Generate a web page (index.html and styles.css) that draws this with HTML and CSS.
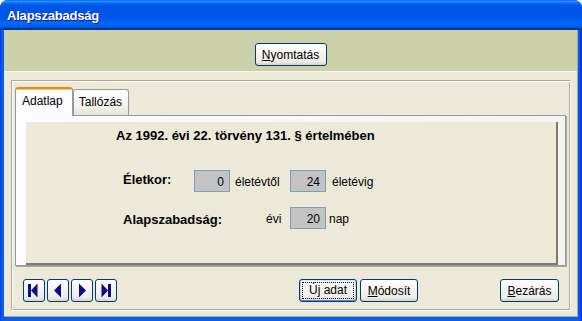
FILE: index.html
```html
<!DOCTYPE html>
<html lang="hu">
<head>
    <meta charset="UTF-8">
    <title>Alapszabadság</title>
    <link rel="stylesheet" href="styles.css">
</head>
<body>
    <div class="window">
        <div class="titlebar">Alapszabadság</div>
        <div class="client">
            <div class="toolbar">
                <button class="btn btn-print"><u>N</u>yomtatás</button>
            </div>
            <div class="content">
                <div class="group">
                    <div class="tabs">
                        <div class="tab tab-active">Adatlap</div>
                        <div class="tab tab-browse">Tallózás</div>
                    </div>
                    <div class="page">
                        <div class="panel">
                            <p class="law">Az 1992. évi 22. törvény 131. § értelmében</p>
                            <div class="row row-age">
                                <span class="label label-age">Életkor:</span>
                                <span class="field">0</span>
                                <span class="unit unit-from">életévtől</span>
                                <span class="field">24</span>
                                <span class="unit unit-to">életévig</span>
                            </div>
                            <div class="row row-days">
                                <span class="label label-days">Alapszabadság:</span>
                                <span class="unit unit-year">évi</span>
                                <span class="field">20</span>
                                <span class="unit unit-day">nap</span>
                            </div>
                        </div>
                    </div>
                    <div class="actions">
                        <div class="nav">
                            <button class="btn btn-nav" title="Első">
                                <svg viewBox="0 0 20 21" width="20" height="21"><rect x="4" y="4" width="3" height="13"/><polygon points="7,10.5 13.5,3.5 13.5,17.5"/></svg>
                            </button>
                            <button class="btn btn-nav" title="Előző">
                                <svg viewBox="0 0 20 21" width="20" height="21"><polygon points="6,10.5 13,3.5 13,17.5"/></svg>
                            </button>
                            <button class="btn btn-nav" title="Következő">
                                <svg viewBox="0 0 20 21" width="20" height="21"><polygon points="7,3.5 14,10.5 7,17.5"/></svg>
                            </button>
                            <button class="btn btn-nav" title="Utolsó">
                                <svg viewBox="0 0 20 21" width="20" height="21"><polygon points="5.5,3.5 12,10.5 5.5,17.5"/><rect x="12" y="4" width="3" height="13"/></svg>
                            </button>
                        </div>
                        <button class="btn btn-new btn-focus"><span class="focus-ring">Ú<u>j</u> adat</span></button>
                        <button class="btn btn-edit"><u>M</u>ódosít</button>
                        <button class="btn btn-close"><u>B</u>ezárás</button>
                    </div>
                </div>
            </div>
        </div>
    </div>
</body>
</html>
```

FILE: styles.css
```css
* {
    box-sizing: border-box;
}
body {
    margin: 0;
    background-color: #ffffff;
    font-family: "Liberation Sans", Arial, sans-serif;
    font-size: 12px;
    color: #000;
}
.window {
    width: 582px;
    height: 321px;
    display: flex;
    flex-direction: column;
    background: linear-gradient(to right, #0831d9 0, #0055ea 1px, #0a5ee8 3px, #0a5ee8 578px, #0055ea 580px, #0831d9 581px);
    border-radius: 8px 8px 0 0;
    overflow: hidden;
}
.titlebar {
    height: 30px;
    flex: none;
    padding: 8px 0 0 7px;
    background: linear-gradient(to bottom, #0058ee 0%, #3593ff 4%, #288eff 6%, #127dff 8%, #036ffc 10%, #0262ee 14%, #0057e5 20%, #0054e3 24%, #0055eb 56%, #005bf5 66%, #026afe 76%, #0062ef 86%, #0052d6 92%, #0040ab 94%, #003092 100%);
    color: #fff;
    font-weight: bold;
    font-size: 13px;
    line-height: 15px;
    letter-spacing: -0.2px;
    text-shadow: 1px 1px #0a1e8c;
}
.client {
    flex: 1;
    margin: 0 4px 4px;
    background-color: #ece9d8;
    display: flex;
    flex-direction: column;
    border-right: 1px solid #aca899;
    border-bottom: 1px solid #aca899;
}
.toolbar {
    height: 42px;
    flex: none;
    display: flex;
    justify-content: center;
    padding-top: 13px;
    background-color: #cbd0a9;
    border-bottom: 1px solid #f6f5ee;
}
.content {
    flex: 1;
    display: flex;
    padding: 8px 6px 5px 7px;
}
.group {
    flex: 1;
    display: flex;
    flex-direction: column;
    padding: 6px 4px 8px 3px;
    border: 1px solid;
    border-color: #aca899 #fff #fff #aca899;
    box-shadow: inset 1px 1px #fff, inset -1px -1px #aca899;
}

/* tabs */
.tabs {
    height: 28px;
    display: flex;
    align-items: flex-end;
}
.tab {
    height: 26px;
    border: 1px solid #919b9c;
    border-bottom: none;
    border-radius: 3px 3px 0 0;
    background: linear-gradient(#fff, #f4f3ee 60%, #e6e4d9);
    line-height: 24px;
    white-space: nowrap;
}
.tab-active {
    position: relative;
    z-index: 1;
    height: 29px;
    margin-bottom: -1px;
    padding: 0 9px 0 6px;
    background: #fcfcfe;
    border-top: 2px solid #e68b2c;
    box-shadow: inset 0 1px #ffc73c;
    line-height: 25px;
}
.tab-browse {
    padding: 0 6px 0 5px;
}
.page {
    height: 151px;
    display: flex;
    flex-direction: column;
    padding: 6px 7px 0 10px;
    background: linear-gradient(to right, #fcfcfe, #f4f3ee);
    border: 1px solid #919b9c;
    box-shadow: 1px 1px #aca899;
}
.panel {
    flex: 1;
    padding-left: 90px;
    background-color: #ece9d8;
    border-right: 2px solid #7d7b70;
    border-bottom: 2px solid #7d7b70;
}
.law {
    margin: 6px 0 0;
    font-size: 13px;
    font-weight: bold;
    line-height: 15px;
}
.row {
    display: flex;
    align-items: center;
    height: 22px;
    padding-left: 7px;
}
.row-age {
    margin-top: 27px;
}
.row-days {
    margin-top: 15px;
}
.label {
    font-size: 13px;
    font-weight: bold;
    line-height: 15px;
}
.label-age {
    width: 71px;
    padding-bottom: 3px;
}
.label-days {
    width: 143px;
    padding-top: 3px;
}
.field {
    width: 36px;
    height: 22px;
    padding: 2px 5px 0 0;
    text-align: right;
    line-height: 18px;
    background-color: #c3c3c3;
    border: 1px solid #7f9db9;
}
.unit {
    padding-top: 3px;
    line-height: 15px;
}
.unit-from {
    width: 60px;
    padding-left: 5px;
}
.unit-to {
    padding-left: 6px;
}
.unit-year {
    width: 24px;
}
.unit-day {
    padding-left: 3px;
}

/* buttons */
.actions {
    display: flex;
    margin-top: 13px;
    padding-left: 8px;
}
.nav {
    display: flex;
    gap: 2px;
}
.btn {
    height: 23px;
    padding: 0;
    font-family: "Liberation Sans", Arial, sans-serif;
    font-size: 12px;
    color: #000;
    border: 1px solid #003c74;
    border-radius: 3px;
    background: linear-gradient(#fff 0%, #f5f4f0 40%, #ecebe6 85%, #d6d0c5 100%);
    cursor: pointer;
}
.btn-print {
    width: 72px;
}
.btn-nav {
    width: 22px;
    display: flex;
    align-items: center;
    justify-content: center;
}
.btn-nav svg {
    display: block;
    fill: #0c0c84;
}
.btn-new {
    width: 58px;
    margin-left: 182px;
    display: flex;
}
.btn-focus {
    box-shadow: inset 0 1px #cee7ff, inset 0 -1px #6982ee, inset 1px 0 #b8d0f9, inset -1px 0 #b8d0f9;
}
.focus-ring {
    flex: 1;
    margin: 2px;
    border: 1px dotted #000;
    line-height: 15px;
}
.btn-edit {
    width: 58px;
    margin-left: 3px;
}
.btn-close {
    width: 59px;
    margin-left: 82px;
}
```
